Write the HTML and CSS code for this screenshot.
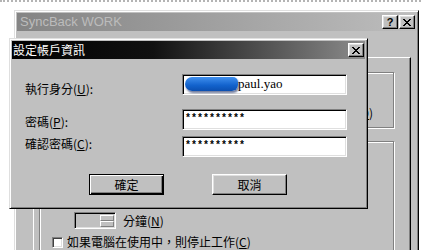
FILE: index.html
```html
<!DOCTYPE html>
<html lang="zh-Hant">
<head>
    <meta charset="UTF-8">
    <title>設定帳戶資訊</title>
    <link rel="stylesheet" href="styles.css">
</head>
<body>
    <div class="desktop">
        <div class="top-rule"></div>

        <!-- window behind the dialog -->
        <div class="window main-window">
            <div class="titlebar inactive">
                <span class="title-text">SyncBack WORK</span>
                <div class="title-buttons">
                    <button class="caption-btn help-btn">?</button>
                    <button class="caption-btn">
                        <svg width="8" height="7" viewBox="0 0 8 7"><path d="M0 0h2v1H0zM6 0h2v1H6zM1 1h2v1H1zM5 1h2v1H5zM2 2h4v1H2zM3 3h2v1H3zM2 4h4v1H2zM1 5h2v1H1zM5 5h2v1H5zM0 6h2v1H0zM6 6h2v1H6z" fill="#000"/></svg>
                    </button>
                </div>
            </div>

            <div class="tab-panel">
                <div class="group-box group-top">
                    <span class="group-text">顯示進度視窗(<u>D</u>)</span>
                </div>
                <div class="group-box group-bottom">
                    <div class="spin-row">
                        <div class="spin-field">
                            <div class="spin-buttons">
                                <span class="spin-btn"></span>
                                <span class="spin-btn"></span>
                            </div>
                        </div>
                        <span>分鐘(<u>N</u>)</span>
                    </div>
                    <div class="check-row">
                        <span class="check-box"></span>
                        <span>如果電腦在使用中，則停止工作(<u>C</u>)</span>
                    </div>
                </div>
            </div>
        </div>

        <!-- account dialog -->
        <div class="window dialog">
            <div class="titlebar active">
                <span class="title-text">設定帳戶資訊</span>
                <div class="title-buttons">
                    <button class="caption-btn">
                        <svg width="8" height="7" viewBox="0 0 8 7"><path d="M0 0h2v1H0zM6 0h2v1H6zM1 1h2v1H1zM5 1h2v1H5zM2 2h4v1H2zM3 3h2v1H3zM2 4h4v1H2zM1 5h2v1H1zM5 5h2v1H5zM0 6h2v1H0zM6 6h2v1H6z" fill="#000"/></svg>
                    </button>
                </div>
            </div>

            <div class="dialog-body">
                <div class="field-row">
                    <span class="field-label lbl-user">執行身分(<u>U</u>):</span>
                    <div class="text-field"><span class="redact"></span>paul.yao</div>
                </div>
                <div class="field-row">
                    <span class="field-label lbl-pass">密碼(<u>P</u>):</span>
                    <div class="text-field masked">**********</div>
                </div>
                <div class="field-row tight">
                    <span class="field-label lbl-confirm">確認密碼(<u>C</u>):</span>
                    <div class="text-field masked">**********</div>
                </div>

                <div class="dialog-buttons">
                    <button class="push-btn default">確定</button>
                    <button class="push-btn">取消</button>
                </div>
            </div>
        </div>
    </div>
</body>
</html>
```

FILE: styles.css
```css
body {
    margin: 0;
    background-color: #ffffff;
    font-family: "Noto Sans CJK TC", "Liberation Sans", sans-serif;
    font-size: 12px;
    line-height: 14px;
    color: #000;
}

.desktop {
    position: relative;
    width: 421px;
    height: 250px;
    overflow: hidden;
}

.top-rule {
    position: absolute;
    left: 0;
    right: 0;
    top: 0;
    border-top: 2px dotted #b4b4b4;
}

/* classic raised window frame */
.window {
    position: absolute;
    box-sizing: border-box;
    background-color: #c0c0c0;
    border: 1px solid;
    border-color: #dfdfdf #000 #000 #dfdfdf;
    box-shadow: inset 1px 1px #fff, inset -1px -1px #808080;
    padding: 2px;
}

.main-window {
    left: 14px;
    top: 10px;
    width: 405px;
    height: 262px;
}

.dialog {
    left: 9px;
    top: 38px;
    width: 359px;
    height: 171px;
    z-index: 2;
}

.titlebar {
    height: 18px;
    display: flex;
    align-items: center;
    justify-content: space-between;
    padding: 0 1px 0 3px;
}

.titlebar.inactive {
    background: linear-gradient(to right, #848484, #bdbdbd);
    color: #bcbcbc;
}

.titlebar.inactive .title-text {
    font-family: "Liberation Sans", sans-serif;
    font-size: 13px;
}

.titlebar.active {
    background: linear-gradient(to right, #000 0%, #111 40%, #8c8c8c 100%);
    color: #fff;
    padding-left: 1px;
}

.title-buttons {
    display: flex;
    gap: 1px;
}

.caption-btn {
    width: 16px;
    height: 14px;
    padding: 0;
    box-sizing: border-box;
    background-color: #c0c0c0;
    border: 1px solid;
    border-color: #fff #000 #000 #fff;
    box-shadow: inset -1px -1px #808080, inset 1px 1px #dfdfdf;
    display: flex;
    align-items: center;
    justify-content: center;
}

.help-btn {
    font-family: "Liberation Sans", sans-serif;
    font-weight: bold;
    font-size: 11px;
    line-height: 11px;
}

/* background window contents */
.tab-panel {
    margin: 26px 5px 0 16px;
    height: 200px;
    border: 1px solid;
    border-color: #fff #000 #000 #fff;
    box-shadow: inset -1px -1px #808080;
}

.group-box {
    margin: 0 16px 0 5px;
    border: 1px solid #808080;
    box-shadow: inset 1px 1px #fff, 1px 1px #fff;
}

.group-top {
    margin-top: 14px;
    display: flex;
    justify-content: flex-end;
    padding: 33px 20px 0 0;
    box-sizing: border-box;
    height: 56px;
}

.group-bottom {
    margin-top: 13px;
    height: 140px;
    padding-top: 70px;
    box-sizing: border-box;
}

.spin-row {
    display: flex;
    align-items: center;
    gap: 7px;
    padding-left: 34px;
}

.spin-field {
    width: 42px;
    height: 17px;
    box-sizing: border-box;
    border: 1px solid;
    border-color: #808080 #fff #fff #808080;
    box-shadow: inset 1px 1px #000, inset -1px -1px #dfdfdf;
    display: flex;
    justify-content: flex-end;
    align-items: center;
    padding-right: 1px;
}

.spin-buttons {
    display: flex;
    flex-direction: column;
}

.spin-btn {
    width: 14px;
    height: 6px;
    box-sizing: border-box;
    border: 1px solid;
    border-color: #fff #808080 #808080 #fff;
    background-color: #c0c0c0;
}

.check-row {
    display: flex;
    align-items: center;
    gap: 4px;
    margin-top: 6px;
    padding-left: 12px;
}

.check-box {
    width: 11px;
    height: 11px;
    box-sizing: border-box;
    background-color: #fff;
    border: 1px solid;
    border-color: #808080 #fff #fff #808080;
    box-shadow: inset 1px 1px #404040, inset -1px -1px #dfdfdf;
}

/* dialog form */
.dialog-body {
    padding: 15px 0 0 13px;
}

.field-row {
    display: flex;
    align-items: flex-start;
}

.field-row + .field-row {
    margin-top: 13px;
}

.field-row.tight {
    margin-top: 6px;
}

.field-label {
    width: 157px;
}

.lbl-user {
    padding-top: 8px;
}

.lbl-pass {
    padding-top: 6px;
}

.lbl-confirm {
    padding-top: 1px;
}

.text-field {
    width: 165px;
    height: 21px;
    box-sizing: border-box;
    background-color: #fff;
    border: 1px solid;
    border-color: #808080 #fff #fff #808080;
    box-shadow: inset 1px 1px #000, inset -1px -1px #dfdfdf;
    padding: 1px 2px 0 2px;
    font-family: "Liberation Serif", serif;
    font-size: 13px;
    line-height: 15px;
    white-space: nowrap;
    overflow: hidden;
}

.text-field.masked {
    font-family: "Liberation Mono", monospace;
    font-size: 10px;
    font-weight: bold;
    line-height: 13px;
    padding-top: 2px;
}

.redact {
    display: inline-block;
    vertical-align: top;
    margin-top: 1px;
    width: 53px;
    height: 14px;
    border-radius: 7px 5px 6px 7px;
    background: linear-gradient(#3f8fee, #1262cc 60%, #0b4fb0);
    box-shadow: 1px 2px 2px rgba(0, 20, 80, 0.55);
}

.dialog-buttons {
    display: flex;
    gap: 48px;
    margin-top: 17px;
    padding-left: 64px;
}

.push-btn {
    width: 75px;
    height: 21px;
    padding: 0;
    box-sizing: border-box;
    font-family: "Noto Sans CJK TC", sans-serif;
    font-size: 12px;
    background-color: #c0c0c0;
    border: 1px solid;
    border-color: #fff #000 #000 #fff;
    box-shadow: inset -1px -1px #808080, inset 1px 1px #dfdfdf;
}

.push-btn.default {
    border-color: #000;
    box-shadow: inset 1px 1px #fff, inset -1px -1px #000, inset -2px -2px #808080;
}
```
